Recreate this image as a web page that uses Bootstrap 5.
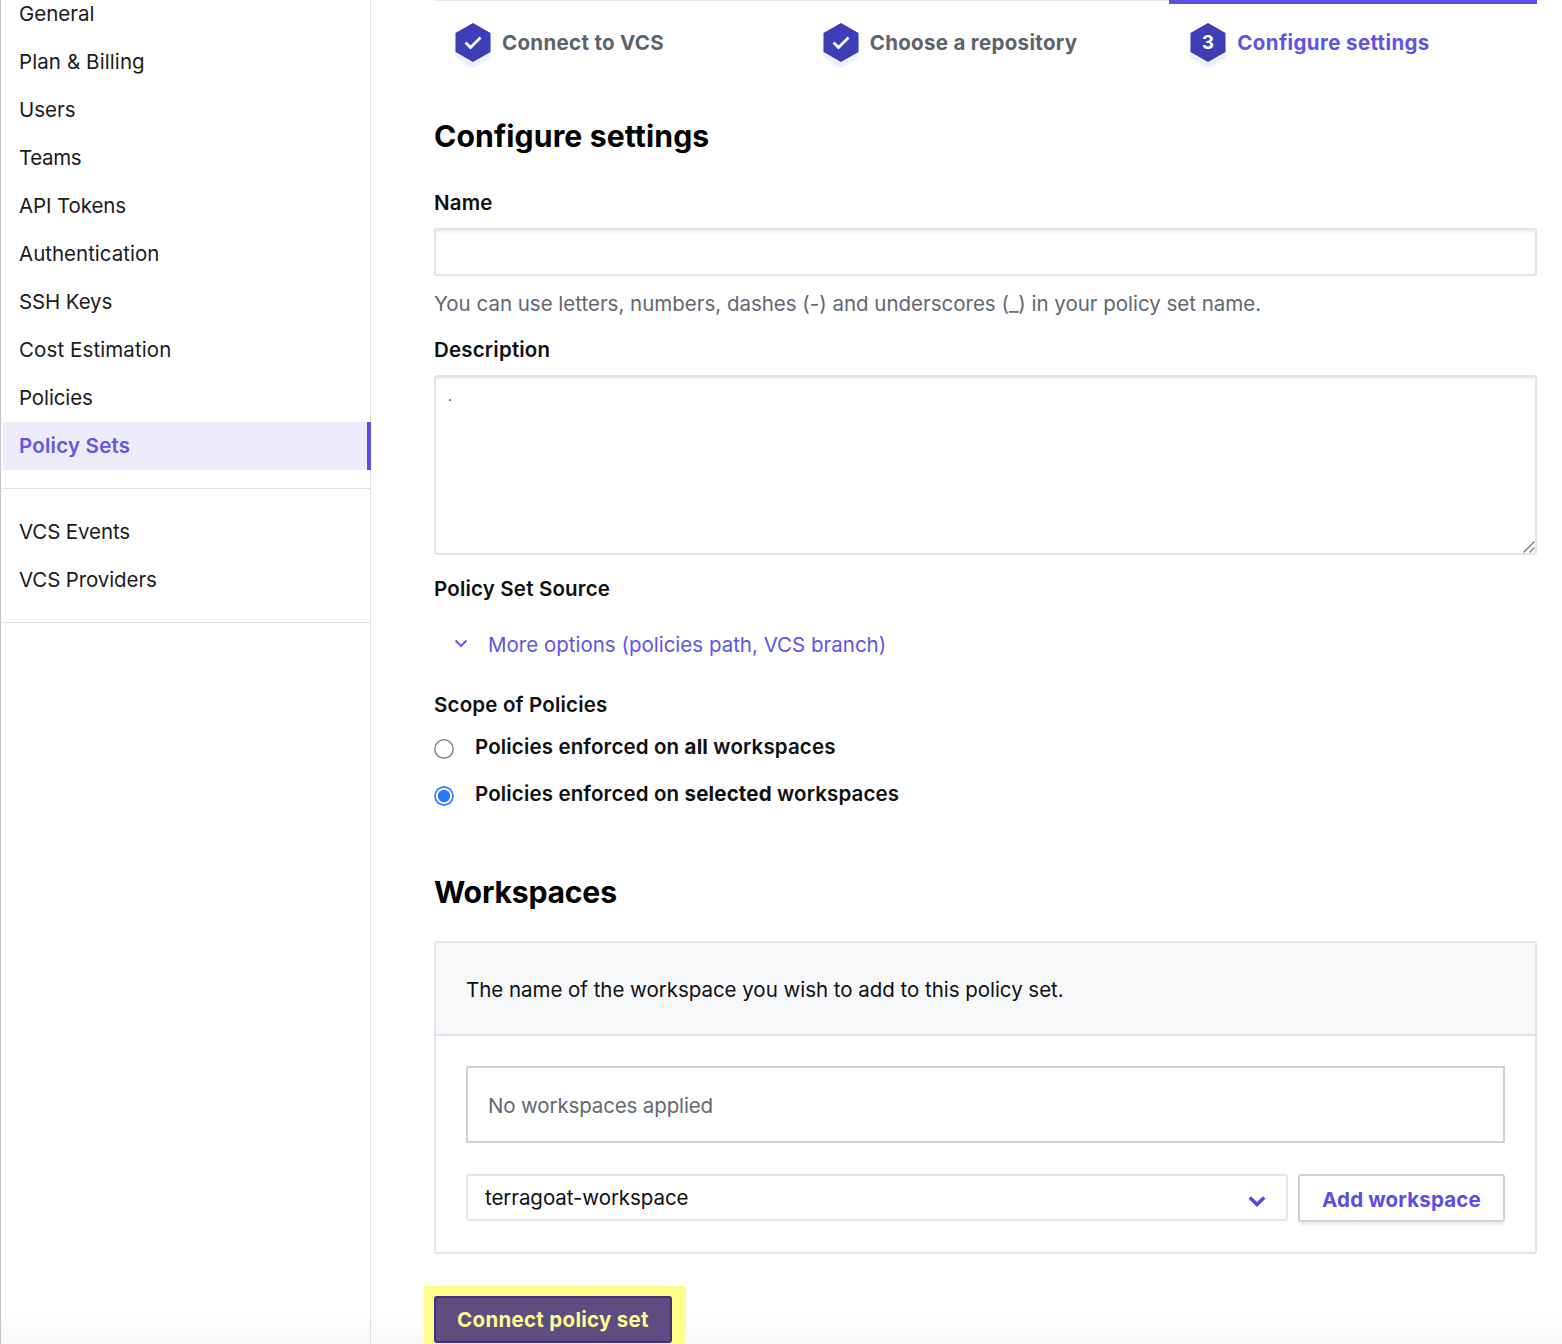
<!DOCTYPE html>
<html lang="en">
<head>
<meta charset="utf-8">
<meta name="viewport" content="width=device-width, initial-scale=1">
<title>Configure settings</title>
<link rel="stylesheet" href="https://cdn.jsdelivr.net/npm/bootstrap@5.3.0/dist/css/bootstrap.min.css">
<style>
:root{--brand:#5c4ee5;--line:#e1e4eb;--muted-ink:#626873}
body{font-family:Inter,"Liberation Sans",sans-serif;font-size:20.5px;line-height:24px;color:#0f1012;background:linear-gradient(#fff 0,#fff 1310px,#f9f9f9 1344px) no-repeat;height:1344px;overflow:hidden}
.side-col{width:371px;border-left:1px solid #c4c4c6;border-right:1px solid #dce0e9;padding-left:2px;height:1344px}
.side-nav{margin-top:-10px}
.side-nav .nav-link{height:48px;padding:12px 16px;color:#1a1b1e;line-height:24px}
.side-nav .nav-link.active{background:#eeecfb;color:#6556e8;font-weight:600;letter-spacing:.22px;border-right:4px solid var(--brand);margin-right:-1px}
.side-rule{height:1px;background:#dcdfe6;margin:18px 0 19px}
.side-nav .snug{letter-spacing:-.35px}
.side-nav .close-set{letter-spacing:-.12px}
.side-nav .airy{letter-spacing:.1px}
.main-col{width:1103px;margin-left:63px}
.step-cell{width:33.3333%;height:74px;border-top:1px solid #e9e9f2;padding:22px 0 0 21px;font-weight:700;color:#5d636d;letter-spacing:.31px}
.step-cell.current{border-top:4px solid var(--brand);padding-top:19px;color:#6153e6;letter-spacing:.37px}
.step-cell svg{width:36px;height:46px;margin-right:11px;overflow:visible}
.step-text{line-height:39px}
.page-title{font-size:30.2px;line-height:36px;font-weight:700;margin:44px 0 0;letter-spacing:.1px;color:#000}
.page-title.second{margin-top:68px;letter-spacing:-.22px}
.field-name{font-weight:600;line-height:24px;display:block;letter-spacing:.18px}
.scope-row .field-name{letter-spacing:.14px}
.field-name b{font-weight:700}
.first-field{margin-top:37px}
.after-gap{margin-top:22px}
.field-box{border:2px solid var(--line);border-radius:3px;box-shadow:inset 0 3px 3px -1px #eeeff2;margin-top:13px}
.field-box.single{height:48px}
.field-box.multi{height:180px;resize:none;padding:9px 12px;font-size:14px;line-height:20px;color:#222}
.area-wrap{position:relative}
.grip{position:absolute;right:2px;bottom:2px;width:12px;height:12px}
.hint{color:var(--muted-ink);margin-top:16px;height:24px;letter-spacing:-.01px}
.more-link{color:#6254e8;text-decoration:none;margin-top:32px;padding-left:20px}
.more-link svg{width:14px;height:10px;margin-right:20px;margin-top:-2px}
.scope-name{margin-top:36px;margin-bottom:18px}
.scope-row{height:24px;margin-bottom:23px}
.scope-row svg{width:20px;height:20px;margin-right:21px;margin-top:3px}
.ws-panel{border:2px solid #e4e6ed;border-radius:3px;height:313px;margin-top:31px}
.ws-head{height:93px;background:#f7f8fa;border-bottom:2px solid #e1e4eb;padding:2px 30px 0;letter-spacing:-.03px}
.ws-body{padding:30px 30px 0}
.empty-box{border:2px solid #ccd1da;height:77px;padding:2px 20px 0;color:var(--muted-ink);letter-spacing:-.14px}
.ws-line{margin-top:31px}
.ws-select{border:2px solid #e1e4eb;border-radius:3px;width:822px;height:47px;padding:1px 20px 0 17px;letter-spacing:-.07px}
.ws-select svg{width:18px;height:13px;margin-top:6px}
.btn-add,.btn-send{font-weight:700;font-size:20.5px;line-height:24px;border-radius:3px}
.btn-add{width:207px;height:48px;padding:3px 0 0;background:#fff;border:2px solid #ccd1da;color:#5c4ee5;letter-spacing:.18px;box-shadow:0 4px 2px -1px #ececef}
.foot-band{height:60px;margin:32px 0 0 -10px}
.hl{background:#fffd8c;width:262px;height:60px;padding:10px 0 0 10px}
.btn-send{width:238px;height:47px;background:#5d4d80;border:2px solid #432f7c;color:#fffb91;padding:1px 0 0;letter-spacing:.29px}
</style>
</head>
<body>
<div class="d-flex">
  <aside class="side-col flex-shrink-0">
    <nav class="nav flex-column flex-nowrap side-nav">
      <a class="nav-link">General</a>
      <a class="nav-link airy">Plan &amp; Billing</a>
      <a class="nav-link">Users</a>
      <a class="nav-link snug">Teams</a>
      <a class="nav-link close-set">API Tokens</a>
      <a class="nav-link">Authentication</a>
      <a class="nav-link close-set">SSH Keys</a>
      <a class="nav-link airy">Cost Estimation</a>
      <a class="nav-link close-set">Policies</a>
      <a class="nav-link active">Policy Sets</a>
      <div class="side-rule"></div>
      <a class="nav-link close-set">VCS Events</a>
      <a class="nav-link close-set">VCS Providers</a>
      <div class="side-rule"></div>
    </nav>
  </aside>
  <main class="main-col flex-shrink-0">
    <div class="d-flex">
      <div class="step-cell d-flex align-items-start">
        <svg viewBox="0 0 36 46"><path fill="#edf3fe" d="M0 16 18 6l18 10v19L18 45.500 0 35z"/><path fill="#3e3db8" d="M18 0l17.500 10v19L18 39 .500 29V10z"/><path d="M10.500 19.500l5 5L25.500 14.500" fill="none" stroke="#fff" stroke-width="2.800"/></svg>
        <span class="step-text">Connect to VCS</span>
      </div>
      <div class="step-cell d-flex align-items-start">
        <svg viewBox="0 0 36 46"><path fill="#edf3fe" d="M0 16 18 6l18 10v19L18 45.500 0 35z"/><path fill="#3e3db8" d="M18 0l17.500 10v19L18 39 .500 29V10z"/><path d="M10.500 19.500l5 5L25.500 14.500" fill="none" stroke="#fff" stroke-width="2.800"/></svg>
        <span class="step-text">Choose a repository</span>
      </div>
      <div class="step-cell current d-flex align-items-start">
        <svg viewBox="0 0 36 46"><path fill="#edf3fe" d="M0 16 18 6l18 10v19L18 45.500 0 35z"/><path fill="#3e3db8" d="M18 0l17.500 10v19L18 39 .500 29V10z"/><text x="18" y="26" text-anchor="middle" font-size="19" font-weight="700" fill="#fff">3</text></svg>
        <span class="step-text">Configure settings</span>
      </div>
    </div>

    <h1 class="page-title">Configure settings</h1>

    <label class="field-name first-field" for="setName">Name</label>
    <input id="setName" class="field-box single form-control" type="text">
    <div class="hint">You can use letters, numbers, dashes (-) and underscores (_) in your policy set name.</div>

    <label class="field-name after-gap" for="setDesc">Description</label>
    <div class="area-wrap">
      <textarea id="setDesc" class="field-box multi form-control">.</textarea>
      <svg class="grip" viewBox="0 0 12 12"><path d="M.500 11.500l11-11M6.500 11.500l5-5" stroke="#777" stroke-width="1.300" fill="none"/></svg>
    </div>

    <div class="field-name after-gap">Policy Set Source</div>
    <a class="more-link d-flex align-items-center"><svg viewBox="0 0 14 10"><path d="M1.500 1.500 7 7l5.500-5.500" fill="none" stroke="#6254e8" stroke-width="1.800"/></svg>More options (policies path, VCS branch)</a>

    <div class="field-name scope-name">Scope of Policies</div>
    <div class="scope-row d-flex align-items-center">
      <svg viewBox="0 0 20 20"><circle cx="10" cy="10" r="9.200" fill="#fff" stroke="#858585" stroke-width="1.500"/></svg>
      <span class="field-name">Policies enforced on <b>all</b> workspaces</span>
    </div>
    <div class="scope-row d-flex align-items-center">
      <svg viewBox="0 0 20 20"><circle cx="10" cy="10" r="9" fill="#fff" stroke="#3b82fb" stroke-width="1.800"/><circle cx="10" cy="10" r="6.200" fill="#2878fb"/></svg>
      <span class="field-name">Policies enforced on <b>selected</b> workspaces</span>
    </div>

    <h2 class="page-title second">Workspaces</h2>
    <section class="ws-panel">
      <div class="ws-head d-flex align-items-center">The name of the workspace you wish to add to this policy set.</div>
      <div class="ws-body">
        <div class="empty-box d-flex align-items-center">No workspaces applied</div>
        <div class="ws-line d-flex justify-content-between">
          <div class="ws-select d-flex align-items-center justify-content-between">terragoat-workspace
            <svg viewBox="0 0 18 13"><path d="M1.800 2.500 9 9.500l7.200-7" fill="none" stroke="#5648e2" stroke-width="3.600"/></svg>
          </div>
          <button class="btn btn-add" type="button">Add workspace</button>
        </div>
      </div>
    </section>

    <div class="foot-band">
      <div class="hl"><button class="btn btn-send" type="button">Connect policy set</button></div>
    </div>
  </main>
</div>
<script src="https://cdn.jsdelivr.net/npm/bootstrap@5.3.0/dist/js/bootstrap.bundle.min.js"></script>
</body>
</html>
